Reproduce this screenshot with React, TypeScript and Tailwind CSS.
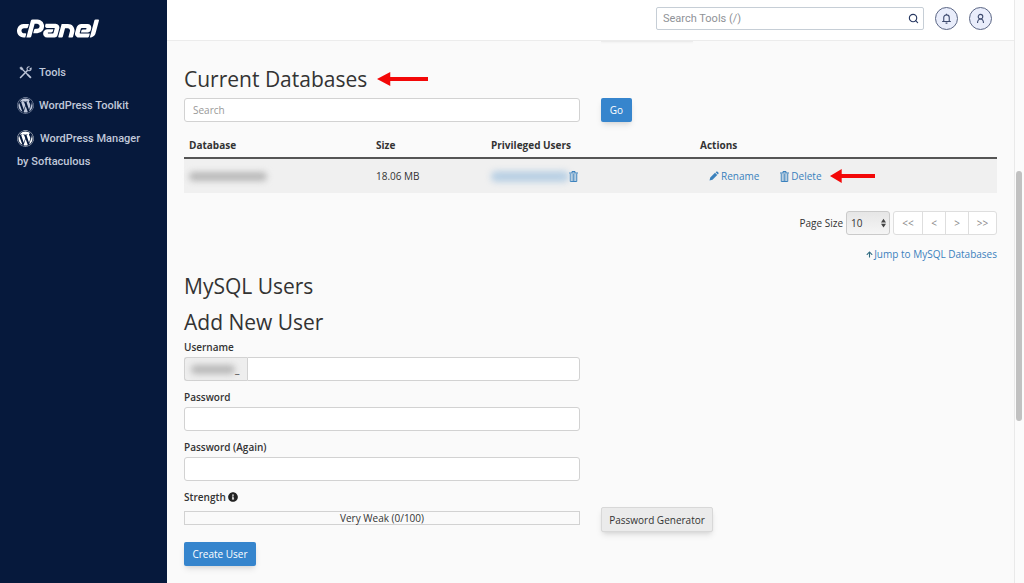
import type { ReactNode } from "react";
import { Search } from "lucide-react";
import { FaArrowUp, FaInfoCircle, FaWordpress } from "react-icons/fa";
import { SiCpanel } from "react-icons/si";

const fieldStyles =
  "h-6 w-full rounded-[3px] border border-[#d2d2d2] bg-white px-2 text-[10px] placeholder:text-[#999] focus:outline-none";

const pages = [
  { label: "<<", name: "First page", width: "w-[29px]" },
  { label: "<", name: "Previous page", width: "w-[23px]" },
  { label: ">", name: "Next page", width: "w-[23px]" },
  { label: ">>", name: "Last page", width: "w-[27px]" },
];

function ToolsIcon() {
  return (
    <svg viewBox="0 0 24 24" className="size-[13px]" fill="none" stroke="currentColor">
      <path d="M6 6 16 16" strokeWidth="2" />
      <path d="m15 15 7 7" strokeWidth="3.4" />
      <path d="M1.5 3.5 3.5 1.5 7 4v3H4Z" fill="currentColor" strokeWidth="1" />
      <path d="M2 22 16 8" strokeWidth="2.8" />
      <path d="M19.5 1.5c-3-.5-5.500 2-4.500 4.800.9 2.600 4.600 3.600 6.800.8.600-.9.800-1.900.5-3L19.500 6" strokeWidth="2" />
    </svg>
  );
}

function PencilIcon() {
  return (
    <svg viewBox="0 0 20 20" className="size-[10px]" fill="currentColor">
      <path d="M1 19l1.500-6L12 3.500 16.500 8 7 17.500ZM13.200 2.300 15 .8h1.500L19.200 3.500V5L17.700 6.800Z" />
    </svg>
  );
}

function TrashIcon() {
  return (
    <svg viewBox="0 0 18 22" className="h-[11px] w-[9px] shrink-0" fill="none" stroke="currentColor" strokeWidth="2">
      <path d="M0 4h18M6 4V1h6V4M2.500 5v16h13V5" />
      <path d="M6.200 6v14M9 6v14M11.800 6v14" strokeWidth="1.500" />
    </svg>
  );
}

function Arrow({ className }: { className: string }) {
  return (
    <svg viewBox="0 0 50 14" preserveAspectRatio="none" className={className} fill="#f30808">
      <path d="M0 7 13 0v5h37v4H13v5Z" />
    </svg>
  );
}

function SidebarLink({ icon, children }: { icon: ReactNode; children: ReactNode }) {
  return (
    <a href="#" className="flex h-[33px] items-center gap-[5px]">
      <span className="flex w-[17px] justify-center">{icon}</span>
      {children}
    </a>
  );
}

function Sidebar() {
  return (
    <nav className="w-[167px] shrink-0 bg-[#06193c] px-[17px] pt-[18px] font-[Roboto,sans-serif] text-[11px] font-medium text-[#c0c8da]">
      <SiCpanel viewBox="0 9 24 6" className="h-[21px] w-[82px] text-white" aria-label="cPanel" />
      <div className="pt-[17px]">
        <SidebarLink icon={<ToolsIcon />}>Tools</SidebarLink>
        <SidebarLink icon={<FaWordpress className="size-[17px]" />}>WordPress Toolkit</SidebarLink>
        <a href="#" className="block leading-[23px]">
          <span className="flex h-[33px] items-center gap-[6px]">
            <FaWordpress className="size-[17px] text-white" />
            WordPress Manager
          </span>
          <span className="-mt-[5px] block">by Softaculous</span>
        </a>
      </div>
    </nav>
  );
}

function Header() {
  const round =
    "flex size-[23px] items-center justify-center rounded-full border border-[#5b6684] bg-[#e9edfb] text-[#3d4a6e]";
  return (
    <header className="flex h-[41px] items-center justify-end border-b border-[#ececec] bg-white pr-[22px] pb-[3px] font-[Roboto,sans-serif]">
      <div className="relative mr-[11px] w-[268px]">
        <input
          type="text"
          aria-label="Search Tools"
          placeholder="Search Tools (/)"
          className="h-[23px] w-full rounded-[2px] border border-[#c6ced6] px-[6px] text-[11px] placeholder:text-[#8f9297] focus:outline-none"
        />
        <button type="button" aria-label="Search" className="absolute top-[6px] right-[5px] text-[#293a63]">
          <Search size={11} strokeWidth={2.5} />
        </button>
      </div>
      <button type="button" aria-label="Notifications" className={`${round} mr-[11px]`}>
        <svg viewBox="0 0 24 24" className="size-[11px]" fill="none" stroke="currentColor" strokeWidth="2.4">
          <path d="M6 18V10a6 6 0 0 1 12 0v8M2.500 18.500h19M10 22h4M12 4V1.500" />
        </svg>
      </button>
      <button type="button" aria-label="Account" className={round}>
        <svg viewBox="0 0 24 24" className="size-[11px]" fill="none" stroke="currentColor" strokeWidth="2.400">
          <circle cx="12" cy="8" r="5" />
          <path d="M5.500 22c0-5.500 3-9 6.500-9s6.500 3.500 6.500 9" />
        </svg>
      </button>
    </header>
  );
}

function DatabaseTable() {
  return (
    <table className="mt-[11px] w-full table-fixed text-left">
      <thead>
        <tr className="h-[25px] border-b-2 border-[#555] text-[10px] font-bold">
          <th className="w-[187px] px-[5px]">Database</th>
          <th className="w-[115px] px-[5px]">Size</th>
          <th className="w-[209px] px-[5px]">Privileged Users</th>
          <th className="px-[5px]">Actions</th>
        </tr>
      </thead>
      <tbody>
        <tr className="h-[35px] bg-[#f0f0f0]">
          <td className="px-[5px]">
            <span className="block h-[9px] w-[78px] rounded-full bg-[#b8b8b8] blur-[3px]" />
          </td>
          <td className="px-[5px]">18.06 MB</td>
          <td className="px-[5px]">
            <div className="flex items-center">
              <span className="h-[11px] w-[78px] rounded-full bg-[#b9d0e4] blur-[3px]" />
              <button type="button" aria-label="Remove user" className="text-[#3a81bd]">
                <TrashIcon />
              </button>
            </div>
          </td>
          <td className="px-[5px]">
            <div className="flex items-center pl-[9px] text-[#3a81bd]">
              <a href="#" className="flex items-center gap-[2px]">
                <PencilIcon />
                Rename
              </a>
              <a href="#" className="ml-[21px] flex items-center gap-[2px]">
                <TrashIcon />
                Delete
              </a>
              <Arrow className="ml-2 h-[14px] w-[45px]" />
            </div>
          </td>
        </tr>
      </tbody>
    </table>
  );
}

function Pagination() {
  return (
    <div className="mt-[18px] flex items-center justify-end">
      <label htmlFor="page-size" className="mr-[3px]">
        Page Size
      </label>
      <div className="relative mr-[3px]">
        <select
          id="page-size"
          className="block h-6 w-[44px] appearance-none rounded-[3px] border border-[#cacaca] bg-linear-to-b from-[#e6e6e6] to-[#f5f5f5] pl-1 text-[10px]"
        >
          <option>10</option>
        </select>
        <svg viewBox="0 0 8 14" className="pointer-events-none absolute top-[7px] right-[4px] h-[10px] w-[5px]" fill="#444">
          <path d="M0 6 4 0l4 6ZM0 8h8l-4 6Z" />
        </svg>
      </div>
      <div className="flex h-6 overflow-hidden rounded-[3px] border border-[#dedede] bg-white text-[#888]">
        {pages.map((page) => (
          <button
            key={page.name}
            type="button"
            aria-label={page.name}
            className={`${page.width} border-r border-[#dedede] last:border-r-0`}
          >
            {page.label}
          </button>
        ))}
      </div>
    </div>
  );
}

function Field({ id, label, prefix }: { id: string; label: string; prefix?: ReactNode }) {
  return (
    <div>
      <label htmlFor={id} className="mb-[2px] block leading-4 font-semibold">
        {label}
      </label>
      <div className="flex">
        {prefix}
        <input id={id} type={id === "username" ? "text" : "password"} className={`${fieldStyles} ${prefix ? "rounded-l-none" : ""}`} />
      </div>
    </div>
  );
}

export default function App() {
  return (
    <div className="flex min-h-screen bg-[#fafafa] font-['Open_Sans',sans-serif] text-[10px] leading-4 text-[#333]">
      <Sidebar />
      <div className="min-w-0 flex-1">
        <Header />
        <main className="px-[17px] pb-4">
          <div className="grid grid-cols-2 gap-[21px]">
            <span className="col-start-2 h-px w-[92px] bg-[#ececec] shadow-xs" />
          </div>

          <h2 className="mt-[23px] flex items-center gap-[10px] text-[21px] leading-7">
            Current Databases
            <Arrow className="h-[14px] w-[51px]" />
          </h2>
          <div className="mt-[5px] grid grid-cols-2 gap-[21px]">
            <input type="text" aria-label="Search databases" placeholder="Search" className={fieldStyles} />
            <button type="button" className="h-6 w-[31px] rounded-[2px] bg-[#3685cd] text-white shadow-md">
              Go
            </button>
          </div>

          <DatabaseTable />
          <Pagination />
          <div className="mt-[11px] flex justify-end">
            <a href="#" className="flex items-center gap-px text-[#3a81bd]">
              <FaArrowUp className="size-[7px] text-[#2f6a80]" />
              Jump to MySQL Databases
            </a>
          </div>

          <h2 className="mt-[10px] text-[21px] leading-7">MySQL Users</h2>
          <h2 className="mt-2 text-[21px] leading-7">Add New User</h2>
          <form className="mt-[3px]">
            <div className="grid grid-cols-2 gap-x-[21px]">
              <div className="space-y-2">
                <Field
                  id="username"
                  label="Username"
                  prefix={
                    <span className="flex h-6 w-[63px] shrink-0 items-center rounded-l-[3px] border border-r-0 border-[#d2d2d2] bg-[#eee] pl-[6px]">
                      <span className="h-[9px] w-[44px] rounded-full bg-[#b8b8b8] blur-[3px]" />_
                    </span>
                  }
                />
                <Field id="password" label="Password" />
                <Field id="password-again" label="Password (Again)" />
                <div>
                  <p className="mb-[6px] flex items-center gap-[2px] font-semibold">
                    Strength <FaInfoCircle className="size-[10px] text-[#222]" />
                  </p>
                  <div className="h-[14px] border border-[#d2d2d2] text-center leading-3">Very Weak (0/100)</div>
                </div>
              </div>
              <div className="flex items-end">
                <button
                  type="button"
                  className="-mb-[7px] h-[25px] w-[112px] rounded-[2px] border border-[#d8d8d8] bg-[#ebebeb] shadow-md"
                >
                  Password Generator
                </button>
              </div>
            </div>
            <button type="submit" className="mt-[17px] h-6 w-[72px] rounded-[2px] bg-[#3685cd] text-white shadow-md">
              Create User
            </button>
          </form>
        </main>
      </div>
      <div className="w-[10px] shrink-0 border-l border-[#e9e9e9] bg-[#fbfbfb] pt-[171px] pl-px">
        <div className="h-[250px] w-[6px] rounded-full bg-[#c1c1c1]" />
      </div>
    </div>
  );
}
